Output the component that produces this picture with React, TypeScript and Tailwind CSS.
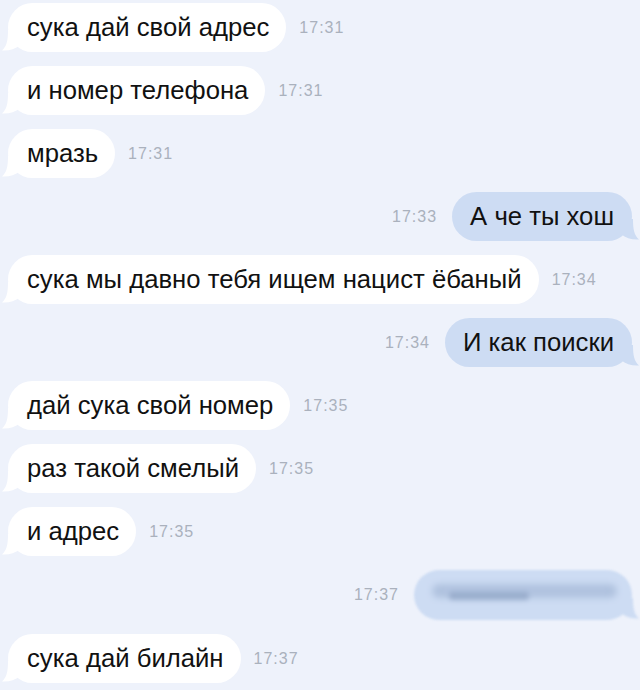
import React from "react";

type Msg = { out: boolean; text?: string; time: string; blur?: boolean };

const msgs: Msg[] = [
  { out: false, text: "сука дай свой адрес", time: "17:31" },
  { out: false, text: "и номер телефона", time: "17:31" },
  { out: false, text: "мразь", time: "17:31" },
  { out: true, text: "А че ты хош", time: "17:33" },
  { out: false, text: "сука мы давно тебя ищем нацист ёбаный", time: "17:34" },
  { out: true, text: "И как поиски", time: "17:34" },
  { out: false, text: "дай сука свой номер", time: "17:35" },
  { out: false, text: "раз такой смелый", time: "17:35" },
  { out: false, text: "и адрес", time: "17:35" },
  { out: true, time: "17:37", blur: true },
  { out: false, text: "сука дай билайн", time: "17:37" },
];

function TailIn() {
  return (
    <svg className="absolute left-[-6px] bottom-0" width="22" height="22" viewBox="0 0 22 22">
      <path d="M6 0 C6 10 5 16 0 20.5 C7 21 13 19 18 15 L22 0 Z" fill="#ffffff" />
    </svg>
  );
}

function TailOut() {
  return (
    <svg className="absolute right-[-7px] bottom-0" width="22" height="22" viewBox="0 0 22 22">
      <path d="M16 0 C16 10 17 16 22 20.5 C15 21 9 19 4 15 L0 0 Z" fill="#cddcf3" />
    </svg>
  );
}

function Time({ t }: { t: string }) {
  return (
    <span className="text-[16px] tracking-[1px] text-[#aab1bd] leading-none">{t}</span>
  );
}

export default function App() {
  return (
    <div
      className="w-[640px] h-[690px] bg-[#eef2fb] flex flex-col gap-[14px] pt-[3px] overflow-hidden"
      style={{ fontFamily: '"Liberation Sans", Arial, sans-serif' }}
    >
      {msgs.map((m, i) =>
        m.out ? (
          <div key={i} className="flex items-center justify-end gap-[15px] pr-[8px]">
            <Time t={m.time} />
            {m.blur ? (
              <div className="relative h-[50px] w-[218px] rounded-[25px] bg-[#cddcf3] blur-[1px]">
                <TailOut />
                <div className="absolute left-[18px] top-[14px] h-[14px] w-[185px] rounded-full bg-[#a9bcda] blur-[3px] opacity-80" />
                <div className="absolute left-[35px] top-[22px] h-[8px] w-[80px] rounded-full bg-[#8ea3c4] blur-[2px] opacity-70" />
              </div>
            ) : (
              <div className="relative h-[49px] flex items-center rounded-[25px] bg-[#cddcf3] pl-[18px] pr-[18px]">
                <TailOut />
                <span className="relative text-[25.7px] text-[#111] leading-none">{m.text}</span>
              </div>
            )}
          </div>
        ) : (
          <div key={i} className="flex items-center gap-[13px] pl-[8px]">
            <div className="relative h-[49px] flex items-center rounded-[25px] bg-white pl-[19px] pr-[17px]">
              <TailIn />
              <span className="relative text-[25.7px] text-[#111] leading-none">{m.text}</span>
            </div>
            <Time t={m.time} />
          </div>
        )
      )}
    </div>
  );
}
